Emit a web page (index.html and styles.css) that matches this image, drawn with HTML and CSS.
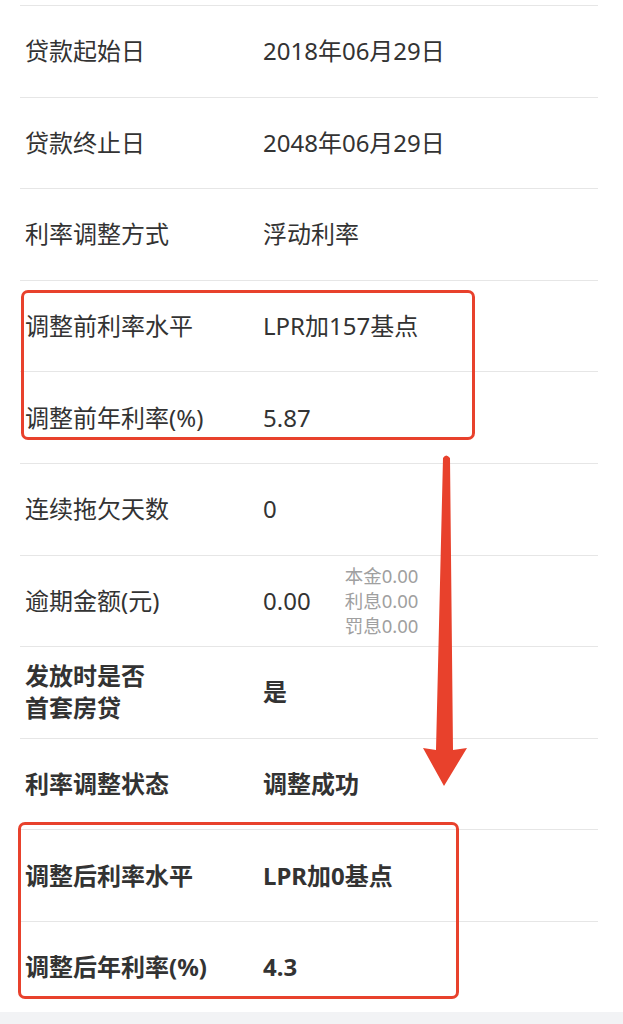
FILE: index.html
```html
<!DOCTYPE html>
<html lang="zh">
<head>
<meta charset="utf-8">
<title>贷款信息</title>
<link rel="stylesheet" href="styles.css">
</head>
<body>
<div class="page">
  <div class="list">
    <div class="row"><div class="label">贷款起始日</div><div class="value">2018年06月29日</div></div>
    <div class="row"><div class="label">贷款终止日</div><div class="value">2048年06月29日</div></div>
    <div class="row"><div class="label">利率调整方式</div><div class="value">浮动利率</div></div>
    <div class="row"><div class="label">调整前利率水平</div><div class="value">LPR加157基点</div></div>
    <div class="row"><div class="label">调整前年利率(%)</div><div class="value">5.87</div></div>
    <div class="row"><div class="label">连续拖欠天数</div><div class="value">0</div></div>
    <div class="row"><div class="label">逾期金额(元)</div><div class="value">0.00<div class="note"><span>本金0.00</span><span>利息0.00</span><span>罚息0.00</span></div></div></div>
    <div class="row bold"><div class="label two">发放时是否<br>首套房贷</div><div class="value">是</div></div>
    <div class="row bold"><div class="label">利率调整状态</div><div class="value">调整成功</div></div>
    <div class="row bold"><div class="label">调整后利率水平</div><div class="value">LPR加0基点</div></div>
    <div class="row bold"><div class="label">调整后年利率(%)</div><div class="value">4.3</div></div>
  </div>
  <div class="footer"></div>

  <div class="mark mark-before"></div>
  <div class="mark mark-after"></div>
  <svg class="arrow" width="623" height="1024" viewBox="0 0 623 1024">
    <path d="M443 458 Q446 453 450 458 L453 750 L467 748 L444 786 L423 748 L436 750 Z" fill="#e8412c"/>
  </svg>
</div>
</body>
</html>
```
FILE: styles.css
```css
html, body {
  margin: 0;
  padding: 0;
  background: #ffffff;
}
.page {
  position: relative;
  width: 623px;
  height: 1024px;
  overflow: hidden;
  font-family: "Noto Sans", "Noto Sans CJK SC", sans-serif;
  color: #333333;
}
.list {
  padding-top: 5px;
  margin-left: 20px;
  margin-right: 25px;
}
.row {
  display: flex;
  align-items: center;
  height: 91.6px;
  box-sizing: border-box;
  border-top: 1px solid #e6e6e6;
  padding-left: 5px;
  font-size: 24px;
}
.label {
  width: 238px;
  flex: none;
  line-height: 32px;
}
.value {
  display: flex;
  align-items: center;
  line-height: 32px;
}
.bold .label, .bold .value {
  font-weight: 700;
}
.note {
  display: flex;
  flex-direction: column;
  margin-left: 34px;
  font-size: 18.5px;
  line-height: 25px;
  color: #a0a0a0;
  font-weight: 400;
}
.footer {
  margin-top: -1px;
  height: 12px;
  background: #f2f3f5;
}
.mark {
  position: absolute;
  border: 3px solid #e8412c;
  border-radius: 7px;
  box-sizing: border-box;
}
.mark-before {
  left: 21px;
  top: 290px;
  width: 454px;
  height: 150px;
}
.mark-after {
  left: 18px;
  top: 822px;
  width: 441px;
  height: 177px;
}
.arrow {
  position: absolute;
  left: 0;
  top: 0;
}
```
